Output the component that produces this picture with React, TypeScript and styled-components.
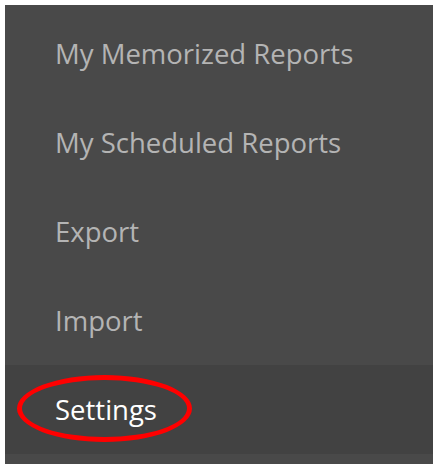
import styled, { createGlobalStyle } from "styled-components";

const GlobalStyle = createGlobalStyle`
	html, body {
		margin: 0;
		padding: 0;
		background: #ffffff;
	}
	body {
		font-family: "Open Sans", "Liberation Sans", sans-serif;
	}
`;

const items = [
	"My Memorized Reports",
	"My Scheduled Reports",
	"Export",
	"Import",
	"Settings",
];

export default function App() {
	return (
		<>
			<GlobalStyle />
			<Panel>
				{items.map((label) => (
					<Item key={label} $active={label === "Settings"}>
						{label}
						{label === "Settings" && <Circle />}
					</Item>
				))}
			</Panel>
		</>
	);
}

const Panel = styled.nav`
	margin: 5px;
	width: 428px;
	height: 459px;
	box-sizing: border-box;
	padding: 4px 0 10px;
	background: #494949;
	display: flex;
	flex-direction: column;
`;

const Item = styled.div<{ $active?: boolean }>`
	position: relative;
	height: 89px;
	line-height: 89px;
	padding-left: 50px;
	font-size: 27.5px;
	color: ${(p) => (p.$active ? "#ffffff" : "#b4b4b4")};
	background: ${(p) => (p.$active ? "#424242" : "transparent")};
	white-space: nowrap;
`;

const Circle = styled.span`
	position: absolute;
	left: 12px;
	top: 10px;
	width: 175px;
	height: 67px;
	box-sizing: border-box;
	border: 5px solid #ff0000;
	border-radius: 50%;
`;
